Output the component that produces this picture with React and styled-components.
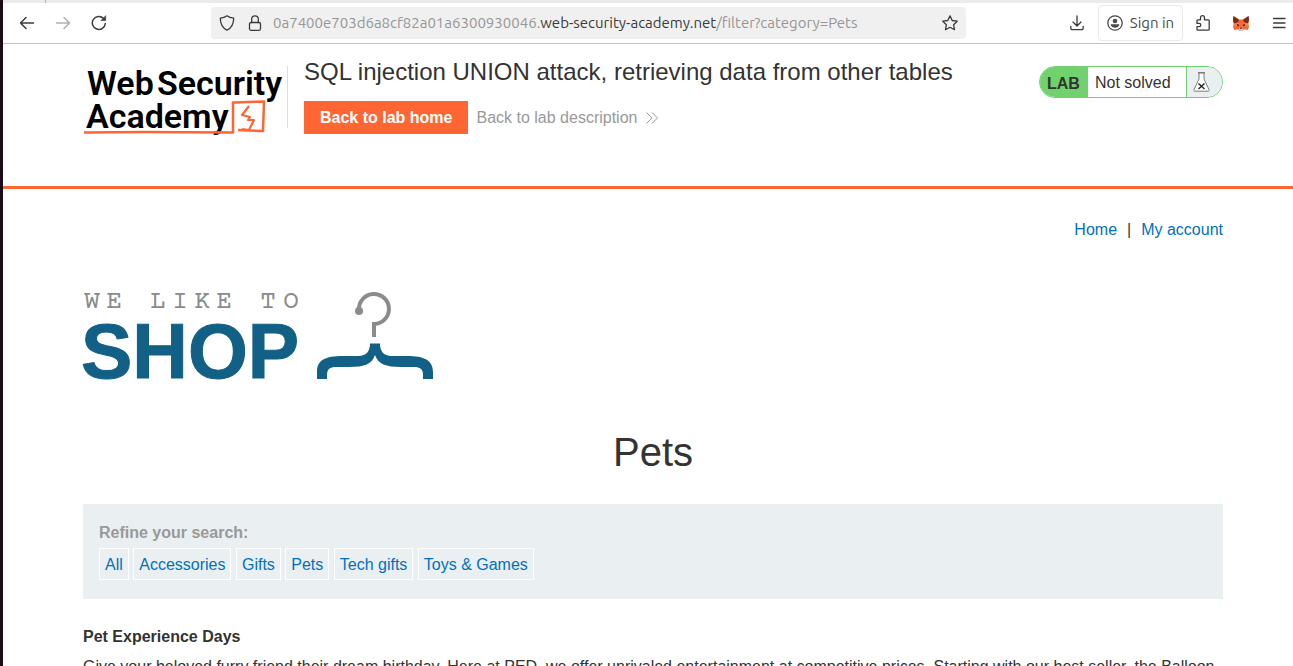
import React from 'react';
import styled, { createGlobalStyle } from 'styled-components';

const Global = createGlobalStyle`
  *, *::before, *::after { box-sizing: border-box; }
  body { margin: 0; background: #fff; color: #333332; font: 16px/20px Arial, "Liberation Sans", sans-serif; }
  h1, h2, p { margin: 0; font-weight: normal; }
  a { text-decoration: none; }
  button { font: inherit; color: inherit; cursor: pointer; }
`;

const Window = styled.div`
  height: 100vh;
  overflow: hidden;
  border-left: 3px solid #1d0b18;
  display: flex;
  flex-direction: column;
`;

const TabStrip = styled.div`
  flex: none;
  height: 3px;
  background: #ebebeb;
  padding-left: 42px;
`;

const TabDivider = styled.div`
  width: 1px;
  height: 3px;
  background: #b4b4b4;
`;

const Toolbar = styled.div`
  flex: none;
  height: 41px;
  display: flex;
  align-items: center;
  border-bottom: 1px solid #c3c3c3;
  color: #3b3b3b;
  font-family: Ubuntu, "Noto Sans", sans-serif;
  padding-left: 6px;
`;

const IconButton = styled.button`
  flex: none;
  width: ${p => p.$width || 36}px;
  height: 32px;
  padding: 0;
  border: 0;
  background: none;
  display: flex;
  align-items: center;
  justify-content: center;
  opacity: ${p => (p.disabled ? 0.4 : 1)};
`;

const AddressBar = styled.div`
  flex: 0 1 755px;
  min-width: 0;
  height: 32px;
  margin-left: 94px;
  margin-right: auto;
  border-radius: 4px;
  background: #f0f0f0;
  display: flex;
  align-items: center;
  padding-left: 2px;
`;

const Url = styled.div`
  flex: 1;
  min-width: 0;
  padding-left: 4px;
  overflow: hidden;
  white-space: nowrap;
  font-size: 15px;
  color: #969696;
`;

const Host = styled.span`
  color: #3b3b3b;
`;

const SignIn = styled.button`
  flex: none;
  height: 36px;
  width: 85px;
  margin: 0 6px 0 3px;
  padding: 0;
  display: flex;
  align-items: center;
  justify-content: center;
  gap: 7px;
  font-size: 15px;
  color: #4a4a4a;
  background: #fff;
  border: 1px solid #e9e9e9;
  border-radius: 4px;
`;

const Page = styled.div`
  flex: 1;
  min-height: 0;
  overflow: hidden;
`;

const Container = styled.div`
  padding: 0 70px 0 80px;
`;

const LabHeader = styled.header`
  border-bottom: 3px solid #ff6633;
  height: 145px;
`;

const HeaderRow = styled(Container)`
  display: flex;
  align-items: flex-start;
`;

const AcademyLogo = styled.a`
  flex: none;
  display: block;
  width: 205px;
  height: 62px;
  margin-top: 22px;
  border-right: 1px solid #dcdcdc;

  svg { display: block; overflow: visible; }
`;

const TitleBlock = styled.div`
  flex: 1;
  padding: 14px 16px 0;
`;

const LabTitle = styled.h2`
  font-size: 24px;
  line-height: 28px;
`;

const LabActions = styled.div`
  display: flex;
  align-items: center;
  gap: 8px;
  margin-top: 15px;
`;

const PrimaryLink = styled.a`
  padding: 7px 16px 6px;
  background: #ff6633;
  color: #fff;
  font-weight: bold;
`;

const DescriptionLink = styled.a`
  display: flex;
  align-items: center;
  gap: 9px;
  color: #999;
`;

const Status = styled.div`
  flex: none;
  height: 32px;
  margin-top: 22px;
  border: 1px solid #70d16e;
  border-radius: 16px;
  overflow: hidden;
  display: flex;
  line-height: 32px;
`;

const StatusLab = styled.div`
  width: 48px;
  padding-left: 7px;
  background: #70d16e;
  font-weight: bold;
  line-height: 34px;
`;

const StatusText = styled.div`
  width: 98px;
  padding-left: 7px;
`;

const StatusFlask = styled.div`
  width: 36px;
  padding-left: 6px;
  border-left: 1px solid #70d16e;
  background: #eaeff2;
  display: flex;
  align-items: center;
`;

const TopLinks = styled.nav`
  display: flex;
  justify-content: flex-end;
  gap: 10px;
  padding-top: 31px;
`;

const TextLink = styled.a`
  color: #0071bc;
`;

const ShopLogo = styled.svg`
  display: block;
  margin-top: 50px;
  overflow: visible;
`;

const CategoryTitle = styled.h1`
  margin-top: 46px;
  text-align: center;
  font-size: 40px;
  line-height: 48px;
`;

const Filters = styled.section`
  margin-top: 28px;
  padding: 19px 16px;
  background: #eaeff2;
`;

const FilterLabel = styled.div`
  font-weight: bold;
  color: #999;
`;

const FilterRow = styled.div`
  margin-top: 5px;
`;

const FilterLink = styled(TextLink)`
  display: inline-block;
  vertical-align: top;
  border: 1px solid #fff;
  padding: 6px 5px 4px;
`;

const ItemTitle = styled.h2`
  margin-top: 28px;
  font-size: 16px;
  font-weight: bold;
`;

const ItemText = styled.p`
  margin-top: 10px;
`;

const Svg = ({ size = 16, children, ...rest }) => (
  <svg width={size} height={size} viewBox="0 0 16 16" fill="none" stroke="currentColor" strokeWidth="1.3" strokeLinecap="round" strokeLinejoin="round" aria-hidden="true" {...rest}>
    {children}
  </svg>
);

const Fox = () => (
  <svg width="18" height="16" viewBox="0 0 18 16" aria-hidden="true">
    <path d="M1.500 1L7 4.500h4L16.500 1l.7 4-.9 4 .7 3-1.200 3-3.300-.8L11 15.500H7l-1.500-1.300-3.300.8L1 12l.7-3-.9-4z" fill="#f26a35" />
    <path d="M1.500 1L7 4.800 6 7.500 2 8.500 1 5zM16.500 1L11 4.800l1 2.700 4 1 1-3.500z" fill="#7a2d1a" />
    <path d="M2 8.500l4-1 1 3-5.500 1zM16 8.500l-4-1-1 3 5.500 1z" fill="#f9803f" />
    <path d="M5 9l2 .8v1.400l-1.800-.5zM13 9l-2 .8v1.400l1.800-.5z" fill="#3b1d18" />
    <path d="M7 12.500h4l.3 2-.8 1h-3l-.8-1z" fill="#d9c6bd" />
    <path d="M7.700 12.500h2.600v1.300H7.700z" fill="#3a3038" />
  </svg>
);

const categories = ['All', 'Accessories', 'Gifts', 'Pets', 'Tech gifts', 'Toys & Games'];

export default function App() {
  return (
    <Window>
      <Global />
      <TabStrip><TabDivider /></TabStrip>
      <Toolbar>
        <IconButton aria-label="Back"><Svg strokeWidth="1.5"><path d="M14.500 8h-13M7 2.500L1.500 8 7 13.500" /></Svg></IconButton>
        <IconButton aria-label="Forward" disabled><Svg strokeWidth="1.5"><path d="M1.500 8h13M9 2.500L14.500 8 9 13.500" /></Svg></IconButton>
        <IconButton aria-label="Reload"><Svg strokeWidth="1.5"><path d="M14.300 8.500A6.500 6.500 0 1 1 12.600 3.500" /><path d="M14.700 1v4.500h-4.500z" fill="currentColor" strokeWidth=".6" /></Svg></IconButton>
        <AddressBar>
          <IconButton $width={28} aria-label="Tracking protection"><Svg><path d="M8 .8c2 1.500 4.300 2.100 6.700 2.300 0 5.400-1.900 9.900-6.700 12.100C3.200 13 1.300 8.500 1.300 3.100 3.700 2.900 6 2.300 8 .8z" /></Svg></IconButton>
          <IconButton $width={28} aria-label="Site information"><Svg><rect x="2.500" y="7.500" width="11" height="7.800" rx="1.500" /><path d="M4.700 7.500V4.200a3.300 3.300 0 0 1 6.600 0v3.300" /></Svg></IconButton>
          <Url>0a7400e703d6a8cf82a01a6300930046.<Host>web-security-academy.net</Host>/filter?category=Pets</Url>
          <IconButton $width={32} aria-label="Bookmark"><Svg><path d="M8 .9l2.200 4.600 5 .7-3.600 3.500.9 5L8 12.300l-4.500 2.400.9-5L.8 6.200l5-.7z" /></Svg></IconButton>
        </AddressBar>
        <IconButton aria-label="Downloads"><Svg><path d="M8 1v9.500M4 7l4 4 4-4M1.800 11.500v1.800a1.300 1.300 0 0 0 1.300 1.300h9.800a1.300 1.300 0 0 0 1.300-1.300v-1.800" /></Svg></IconButton>
        <SignIn>
          <Svg><circle cx="8" cy="8" r="7.200" /><circle cx="8" cy="6" r="2.300" fill="currentColor" stroke="none" /><path d="M3.800 9.300h8.400v1.200A5 5 0 0 1 8 12.800a5 5 0 0 1-4.200-2.300z" fill="currentColor" stroke="none" /></Svg>
          Sign in
        </SignIn>
        <IconButton $width={28} aria-label="Extensions"><Svg><path d="M5.500 4.800V2.700a2 2 0 0 1 4 0v2.100h3.700a1 1 0 0 1 1 1v8.400a1 1 0 0 1-1 1H3a1 1 0 0 1-1-1v-2.600h2.200a1.600 1.600 0 0 0 0-3.200H2V5.800a1 1 0 0 1 1-1z" /></Svg></IconButton>
        <IconButton $width={48} aria-label="Wallet"><Fox /></IconButton>
        <IconButton $width={28} aria-label="Menu"><Svg><path d="M2.500 3.500h11.500M2.500 8h11.500M2.500 12.500h11.500" /></Svg></IconButton>
      </Toolbar>
      <Page>
        <LabHeader>
          <HeaderRow>
            <AcademyLogo href="#academy" aria-label="Web Security Academy">
              <svg width="204" height="72" viewBox="0 0 204 72">
                <g fill="#000" fontFamily="Roboto, sans-serif" fontWeight="600" fontSize="34">
                  <text x="4" y="29">Web</text>
                  <text x="74" y="29">Security</text>
                  <text x="3" y="62">Academy</text>
                </g>
                <g fill="none" stroke="#ff6633" strokeWidth="2.500" strokeLinejoin="round">
                  <path d="M1 66.500c40-.8 90-.6 149 0V36.500c10-.6 20-.8 31-1l-1 29.500-25-1" />
                  <path d="M166 40l-7 9 8 2-2 3 6 0-5 10-7-1" strokeWidth="2.200" />
                </g>
              </svg>
            </AcademyLogo>
            <TitleBlock>
              <LabTitle>SQL injection UNION attack, retrieving data from other tables</LabTitle>
              <LabActions>
                <PrimaryLink href="#lab">Back to lab home</PrimaryLink>
                <DescriptionLink href="#description">
                  Back to lab description
                  <svg width="12" height="12" viewBox="0 0 12 12" fill="none" stroke="#999" aria-hidden="true"><path d="M.5.5L6 6 .5 11.500M6 .5L11.500 6 6 11.500" /></svg>
                </DescriptionLink>
              </LabActions>
            </TitleBlock>
            <Status>
              <StatusLab>LAB</StatusLab>
              <StatusText>Not solved</StatusText>
              <StatusFlask>
                <svg width="17" height="20" viewBox="0 0 17 20" fill="#fff" stroke="#7d7d7d" aria-hidden="true">
                  <path d="M6 .8V7L1 17.500c-.4 1 0 1.700 1 1.700h13c1 0 1.400-.7 1-1.700L11 7V.8" />
                  <path d="M5 .8h7" strokeWidth="1.500" />
                  <path d="M5.500 11.500l6 5.500M11.500 11.500l-6 5.500" stroke="#222" strokeWidth="1.400" />
                </svg>
              </StatusFlask>
            </Status>
          </HeaderRow>
        </LabHeader>
        <Container>
          <TopLinks>
            <TextLink href="#home">Home</TextLink>
            <span>|</span>
            <TextLink href="#account">My account</TextLink>
          </TopLinks>
          <ShopLogo width="352" height="92" viewBox="0 0 352 92">
            <text x="9 31 53 75 97 119 141 163 185 208" y="18" textAnchor="middle" fontFamily="'Courier Prime', 'Liberation Mono', monospace" fontSize="26" fill="#8a8b8c">WE LIKE TO</text>
            <text x="-2" y="88" fontFamily="'Liberation Sans', Arial, sans-serif" fontWeight="bold" fontSize="77" fill="#126085" stroke="#126085">SHOP</text>
            <path d="M276 20A15 15 0 1 1 291 34V47" fill="none" stroke="#8a8b8c" strokeWidth="4" />
            <circle cx="276" cy="21" r="4" fill="#8a8b8c" />
            <path d="M287 53.500h10c0 7 3 12.500 12 12.500h15c17 0 26 4 26 16v7h-10v-4c0-6-3-8-9-8h-13c-15 0-23-3-26-12-3 9-10 12-26 12h-13c-6 0-9 2-9 8v4h-10v-7c0-12 8-16 26-16h15c9 0 12-5.500 12-12.500z" fill="#126085" />
          </ShopLogo>
          <CategoryTitle>Pets</CategoryTitle>
          <Filters>
            <FilterLabel>Refine your search:</FilterLabel>
            <FilterRow>
              {categories.map(name => (
                <React.Fragment key={name}><FilterLink href={'#' + name}>{name}</FilterLink>{' '}</React.Fragment>
              ))}
            </FilterRow>
          </Filters>
          <ItemTitle>Pet Experience Days</ItemTitle>
          <ItemText>Give your beloved furry friend their dream birthday. Here at PED, we offer unrivaled entertainment at competitive prices. Starting with our best seller, the Balloon</ItemText>
        </Container>
      </Page>
    </Window>
  );
}
